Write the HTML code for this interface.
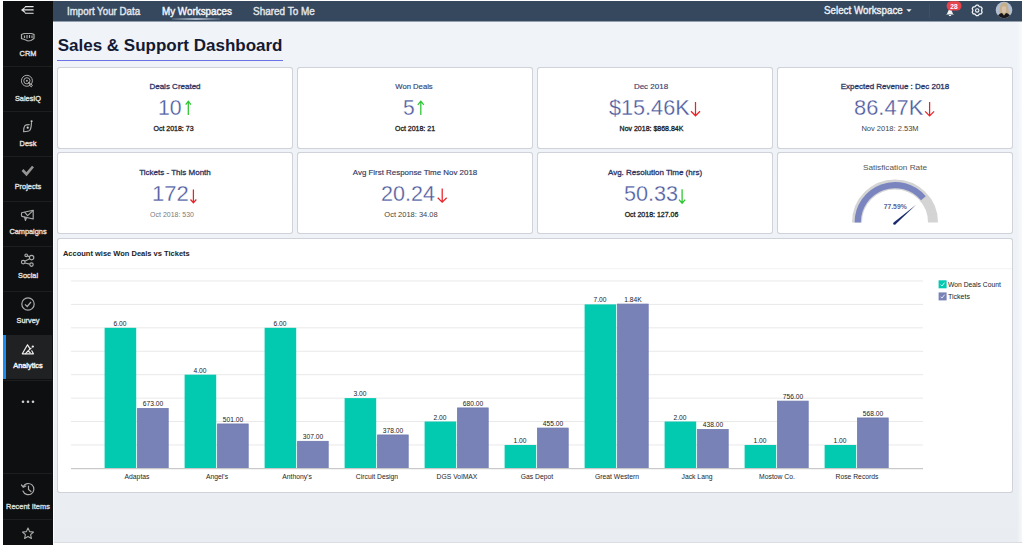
<!DOCTYPE html>
<html><head><meta charset="utf-8">
<style>
*{margin:0;padding:0;box-sizing:border-box}
html,body{width:1025px;height:545px;overflow:hidden;background:#fff;font-family:"Liberation Sans",sans-serif;position:relative}
.r{position:absolute}
.card{position:absolute;background:#fff;border:1px solid #cfd3d9;border-radius:3px;box-shadow:0 0 0.6px rgba(150,155,165,.35)}
svg{position:absolute;overflow:visible}
</style></head><body>
<div class="r" style="left:3px;top:1px;width:50px;height:544px;background:#0e0f10"></div>
<div class="r" style="left:53px;top:1px;width:969px;height:20.5px;background:#35485e"></div>
<div class="r" style="left:53px;top:21px;width:969px;height:521px;background:linear-gradient(#f0f3f8,#eef2f7 60%,#e9edf2)"></div>
<div class="r" style="left:53px;top:21px;width:969px;height:1px;background:#949fad"></div>
<div class="r" style="left:1016.5px;top:22px;width:5.5px;height:520px;background:linear-gradient(90deg,rgba(255,255,255,0),rgba(255,255,255,.55))"></div>
<div class="r" style="left:53px;top:542px;width:969px;height:1px;background:#d9dce0"></div>
<div class="r" style="left:53px;top:21.5px;width:1.3px;height:521px;background:#fbfcfe"></div>
<svg style="left:0;top:0" width="60" height="20"><g stroke="#e6e6e6" stroke-width="1.1" fill="none" stroke-linecap="round"><path d="M25.4 6.6H33.2M23 9.9H33.2M25.4 13.3H33.2M24.9 7.6L21.9 9.9L24.9 12.2"/></g></svg>
<div class="r" style="left:3px;top:66px;width:49px;height:1px;background:#1d1e20"></div>
<div class="r" style="left:3px;top:111px;width:49px;height:1px;background:#1d1e20"></div>
<div class="r" style="left:3px;top:156px;width:49px;height:1px;background:#1d1e20"></div>
<div class="r" style="left:3px;top:201px;width:49px;height:1px;background:#1d1e20"></div>
<div class="r" style="left:3px;top:246px;width:49px;height:1px;background:#1d1e20"></div>
<div class="r" style="left:3px;top:291px;width:49px;height:1px;background:#1d1e20"></div>
<div class="r" style="left:3px;top:336px;width:49px;height:1px;background:#1d1e20"></div>
<div class="r" style="left:3px;top:380px;width:49px;height:1px;background:#1d1e20"></div>
<div class="r" style="left:3px;top:335px;width:49px;height:44px;background:#202122"></div>
<div class="r" style="left:3px;top:335px;width:3px;height:44px;background:#1b8df2"></div>
<div class="r" style="left:3px;top:66px;width:49px;height:1px;background:#1d1e20"></div>
<div style="position:absolute;top:49.53px;font-size:8px;line-height:8px;color:#dadada;font-weight:normal;white-space:nowrap;left:-272.50px;width:600px;text-align:center;transform:scaleX(0.92);transform-origin:300px 0;-webkit-text-stroke:0.45px #dadada;">CRM</div>
<div style="position:absolute;top:95.03px;font-size:8px;line-height:8px;color:#dadada;font-weight:normal;white-space:nowrap;left:-272.50px;width:600px;text-align:center;transform:scaleX(0.92);transform-origin:300px 0;-webkit-text-stroke:0.45px #dadada;">SalesIQ</div>
<div style="position:absolute;top:139.93px;font-size:8px;line-height:8px;color:#dadada;font-weight:normal;white-space:nowrap;left:-272.50px;width:600px;text-align:center;transform:scaleX(0.92);transform-origin:300px 0;-webkit-text-stroke:0.45px #dadada;">Desk</div>
<div style="position:absolute;top:183.43px;font-size:8px;line-height:8px;color:#dadada;font-weight:normal;white-space:nowrap;left:-272.50px;width:600px;text-align:center;transform:scaleX(0.92);transform-origin:300px 0;-webkit-text-stroke:0.45px #dadada;">Projects</div>
<div style="position:absolute;top:228.43px;font-size:8px;line-height:8px;color:#dadada;font-weight:normal;white-space:nowrap;left:-272.50px;width:600px;text-align:center;transform:scaleX(0.92);transform-origin:300px 0;-webkit-text-stroke:0.45px #dadada;">Campaigns</div>
<div style="position:absolute;top:272.13px;font-size:8px;line-height:8px;color:#dadada;font-weight:normal;white-space:nowrap;left:-272.50px;width:600px;text-align:center;transform:scaleX(0.92);transform-origin:300px 0;-webkit-text-stroke:0.45px #dadada;">Social</div>
<div style="position:absolute;top:317.13px;font-size:8px;line-height:8px;color:#dadada;font-weight:normal;white-space:nowrap;left:-272.50px;width:600px;text-align:center;transform:scaleX(0.92);transform-origin:300px 0;-webkit-text-stroke:0.45px #dadada;">Survey</div>
<div style="position:absolute;top:362.33px;font-size:8px;line-height:8px;color:#f4f4f4;font-weight:normal;white-space:nowrap;left:-272.50px;width:600px;text-align:center;transform:scaleX(0.92);transform-origin:300px 0;-webkit-text-stroke:0.45px #f4f4f4;">Analytics</div>
<svg style="left:0;top:0" width="60" height="60"><g stroke="#ababab" stroke-width="1.2" fill="none"><path d="M21.5 34.5L24 33.5H31.5L34 34.5V38.5L31 40.5L28 41L24.5 39.5L21.5 38.5Z"/><path d="M24.5 35.5V38M27 35V38.5M29.5 35V38M32 35.5V38"/></g></svg>
<svg style="left:0;top:0" width="60" height="100"><g stroke="#a9a9a9" stroke-width="1.0" fill="none"><circle cx="26.9" cy="80.8" r="5.5"/><circle cx="26.9" cy="80.8" r="3.1"/><path d="M28 82L30.2 84.3"/><path d="M30.2 83.6L32.4 85.1L31.3 86.9L29.4 85.2Z"/></g><circle cx="26.9" cy="80.8" r="1.0" fill="#a9a9a9"/></svg>
<svg style="left:0;top:0" width="60" height="140"><g stroke="#ababab" stroke-width="1.15" fill="none" stroke-linecap="round"><path d="M31.5 122.6Q31.2 128.6 29.8 130.3Q28.8 131.4 23.6 131.7Q23.6 127.2 24.9 125.6Q25.7 124.7 29.2 124.6"/></g><circle cx="31.6" cy="121.3" r="1.05" fill="#d0d0d0"/><circle cx="27.7" cy="127.7" r="1.1" fill="#d8d8d8"/></svg>
<svg style="left:0;top:0" width="60" height="200"><path d="M22.5 170L26.5 174.2L33 166.5" stroke="#959595" stroke-width="2.6" fill="none"/></svg>
<svg style="left:0;top:0" width="60" height="240"><g stroke="#ababab" stroke-width="1.15" fill="none" stroke-linejoin="round" stroke-linecap="round"><path d="M21.6 212.8Q21.2 214.8 21.8 216.4L33.2 219V210.2Z"/><path d="M24.8 212.4L27.6 215.6L33 210.6"/><path d="M24.6 217.2L25.4 220.4L26.6 217.6"/></g></svg>
<svg style="left:0;top:0" width="60" height="280"><g stroke="#ababab" stroke-width="1.15" fill="none"><circle cx="26.2" cy="255.3" r="1.3"/><circle cx="31.6" cy="257.6" r="2.2"/><circle cx="23.2" cy="262.1" r="1.8"/><circle cx="31.5" cy="264.6" r="1.7"/><path d="M29.6 258.7L24.8 261.2M25 263L29.8 264.1M27.4 255.9L29.5 256.8"/></g></svg>
<svg style="left:0;top:0" width="60" height="320"><g stroke="#ababab" stroke-width="1.2" fill="none"><circle cx="28" cy="304" r="6.2"/><path d="M25 304.3L27.2 306.5L31 302"/></g></svg>
<svg style="left:0;top:0" width="60" height="380"><g stroke="#f0f0f0" stroke-width="1.2" fill="none" stroke-linejoin="round" stroke-linecap="round"><path d="M29.8 348.3L27.5 344.8L22.3 353.8H33.4L31.8 350.8"/><path d="M25.6 353.6L28 350.8L30.2 352.8M28.6 350.4L31 348.2"/></g><circle cx="32.8" cy="346.6" r="1.15" fill="#f0f0f0"/></svg>
<svg style="left:0;top:0" width="60" height="410"><g fill="#d0d0d0"><circle cx="23" cy="401.8" r="1.3"/><circle cx="28" cy="401.8" r="1.3"/><circle cx="33" cy="401.8" r="1.3"/></g></svg>
<div class="r" style="left:3px;top:473px;width:49px;height:1px;background:#1d1e20"></div>
<div class="r" style="left:3px;top:519px;width:49px;height:1px;background:#1d1e20"></div>
<svg style="left:0;top:0" width="60" height="545"><g stroke="#ababab" stroke-width="1.2" fill="none" stroke-linecap="round"><path d="M23.3 486.5A5.6 5.6 0 1 1 23 491"/><path d="M21.5 485L23.3 487.2L25.8 486"/><path d="M28.5 486V489.5L31 491.5"/></g><path d="M28 528L29.6 531.6L33.5 532L30.6 534.6L31.4 538.5L28 536.5L24.6 538.5L25.4 534.6L22.5 532L26.4 531.6Z" stroke="#ababab" stroke-width="1.1" fill="none" stroke-linejoin="round"/></svg>
<div style="position:absolute;top:503.33px;font-size:8px;line-height:8px;color:#d6d6d6;font-weight:normal;white-space:nowrap;left:-272.50px;width:600px;text-align:center;transform:scaleX(0.93);transform-origin:300px 0;-webkit-text-stroke:0.4px #d6d6d6;">Recent Items</div>
<div style="position:absolute;top:5.69px;font-size:11px;line-height:11px;color:#e4e8ee;font-weight:normal;white-space:nowrap;left:66.80px;transform:scaleX(0.885);transform-origin:0 0;-webkit-text-stroke:0.4px #e4e8ee;">Import Your Data</div>
<div style="position:absolute;top:5.69px;font-size:11px;line-height:11px;color:#f4f6f8;font-weight:normal;white-space:nowrap;left:162.40px;transform:scaleX(0.895);transform-origin:0 0;-webkit-text-stroke:0.45px #f4f6f8;">My Workspaces</div>
<div style="position:absolute;top:5.69px;font-size:11px;line-height:11px;color:#e4e8ee;font-weight:normal;white-space:nowrap;left:252.90px;transform:scaleX(0.905);transform-origin:0 0;-webkit-text-stroke:0.4px #e4e8ee;">Shared To Me</div>
<div class="r" style="left:172px;top:18px;width:48px;height:1.5px;background:linear-gradient(90deg,rgba(160,175,195,.2),rgba(175,188,205,.9),rgba(160,175,195,.2))"></div>
<div style="position:absolute;top:5.09px;font-size:11px;line-height:11px;color:#eef1f5;font-weight:normal;white-space:nowrap;left:824.30px;transform:scaleX(0.89);transform-origin:0 0;-webkit-text-stroke:0.4px #eef1f5;">Select Workspace</div>
<svg style="left:0;top:0" width="1025" height="22"><path d="M906.3 9.3H911.6L909 12Z" fill="#eef1f5"/><path d="M929.5 4V18" stroke="#3e5068" stroke-width="1"/><path d="M945.5 14.6Q947.5 14 948 11.5Q948.5 9.5 950 9.5Q951.5 9.5 952 11.5Q952.5 14 954.5 14.6Z" fill="#f4f4f4"/><path d="M948.8 15.2Q950 16.4 951.2 15.2" stroke="#f4f4f4" stroke-width="1" fill="none"/><rect x="946.6" y="1.2" width="14.9" height="9.4" rx="4.7" fill="#e8454a"/><path d="M976.37 5.17L978.03 5.17L979.35 6.68L981.32 7.06L982.15 8.50L981.50 10.40L982.15 12.30L981.32 13.74L979.35 14.12L978.03 15.63L976.37 15.63L975.05 14.12L973.08 13.74L972.25 12.30L972.90 10.40L972.25 8.50L973.08 7.06L975.05 6.68Z" stroke="#f2f4f7" stroke-width="1.3" fill="none" stroke-linejoin="round"/><circle cx="977.2" cy="10.4" r="1.7" stroke="#f2f4f7" stroke-width="1.1" fill="none"/><defs><clipPath id="av"><circle cx="1004" cy="10" r="8.3"/></clipPath></defs><g clip-path="url(#av)"><rect x="995" y="0" width="18" height="20" fill="#b3bed2"/><path d="M999 19Q999.5 9 1000.5 5Q1002 2.2 1004.5 2.5Q1007.5 3 1008 6Q1008.5 11 1010 19Z" fill="#c6b089"/><path d="M1001.8 7Q1004 5.5 1006 7L1005.8 12Q1004 14 1002 12Z" fill="#d8c2ae"/><path d="M997 19Q998 13.5 1002 13L1004 15.5L1006 13Q1010 13.5 1011 19Z" fill="#17171c"/></g></svg>
<div style="position:absolute;top:2.67px;font-size:7px;line-height:7px;color:#fff;font-weight:bold;white-space:nowrap;left:654.10px;width:600px;text-align:center;transform:scaleX(0.95);transform-origin:300px 0;">28</div>
<div style="position:absolute;top:36.61px;font-size:17px;line-height:17px;color:#151a33;font-weight:bold;white-space:nowrap;left:57.70px;">Sales &amp; Support Dashboard</div>
<div class="r" style="left:57px;top:59.5px;width:226px;height:1.5px;background:#6b72e6"></div>
<div class="card" style="left:57px;top:67px;width:236px;height:82px"></div>
<div class="card" style="left:297px;top:67px;width:236px;height:82px"></div>
<div class="card" style="left:537px;top:67px;width:236px;height:82px"></div>
<div class="card" style="left:777px;top:67px;width:236px;height:82px"></div>
<div class="card" style="left:57px;top:152px;width:236px;height:82px"></div>
<div class="card" style="left:297px;top:152px;width:236px;height:82px"></div>
<div class="card" style="left:537px;top:152px;width:236px;height:82px"></div>
<div class="card" style="left:777px;top:152px;width:236px;height:82px"></div>
<div style="position:absolute;top:83.33px;font-size:8px;line-height:8px;color:#2b3566;font-weight:normal;white-space:nowrap;left:-125.00px;width:600px;text-align:center;-webkit-text-stroke:0.3px #2b3566;">Deals Created</div>
<div style="position:absolute;top:97.38px;font-size:22px;line-height:22px;color:#4c599e;font-weight:normal;white-space:nowrap;left:157.80px;transform:scaleX(0.96455);transform-origin:0 0;-webkit-text-stroke:0.3px #fff;">10</div>
<div style="position:absolute;top:125.07px;font-size:7px;line-height:7px;color:#222;font-weight:normal;white-space:nowrap;left:-126.50px;width:600px;text-align:center;-webkit-text-stroke:0.3px #222;">Oct 2018: 73</div>
<div style="position:absolute;top:83.33px;font-size:8px;line-height:8px;color:#38406e;font-weight:normal;white-space:nowrap;left:113.50px;width:600px;text-align:center;transform:scaleX(0.96);transform-origin:300px 0;-webkit-text-stroke:0.15px #38406e;">Won Deals</div>
<div style="position:absolute;top:97.38px;font-size:22px;line-height:22px;color:#4c599e;font-weight:normal;white-space:nowrap;left:402.60px;transform:scaleX(0.955);transform-origin:0 0;-webkit-text-stroke:0.3px #fff;">5</div>
<div style="position:absolute;top:125.07px;font-size:7px;line-height:7px;color:#222;font-weight:normal;white-space:nowrap;left:115.00px;width:600px;text-align:center;-webkit-text-stroke:0.3px #222;">Oct 2018: 21</div>
<div style="position:absolute;top:83.33px;font-size:8px;line-height:8px;color:#38406e;font-weight:normal;white-space:nowrap;left:351.00px;width:600px;text-align:center;-webkit-text-stroke:0.15px #38406e;">Dec 2018</div>
<div style="position:absolute;top:97.38px;font-size:22px;line-height:22px;color:#4c599e;font-weight:normal;white-space:nowrap;left:609.40px;transform:scaleX(0.98365);transform-origin:0 0;-webkit-text-stroke:0.3px #fff;">$15.46K</div>
<div style="position:absolute;top:125.07px;font-size:7px;line-height:7px;color:#222;font-weight:normal;white-space:nowrap;left:351.50px;width:600px;text-align:center;-webkit-text-stroke:0.3px #222;">Nov 2018: $868.84K</div>
<div style="position:absolute;top:83.33px;font-size:8px;line-height:8px;color:#2b3566;font-weight:normal;white-space:nowrap;left:595.00px;width:600px;text-align:center;-webkit-text-stroke:0.3px #2b3566;">Expected Revenue : Dec 2018</div>
<div style="position:absolute;top:97.38px;font-size:22px;line-height:22px;color:#4c599e;font-weight:normal;white-space:nowrap;left:854.20px;transform:scaleX(0.9932);transform-origin:0 0;-webkit-text-stroke:0.3px #fff;">86.47K</div>
<div style="position:absolute;top:124.65px;font-size:7.5px;line-height:7.5px;color:#444;font-weight:normal;white-space:nowrap;left:590.00px;width:600px;text-align:center;">Nov 2018: 2.53M</div>
<div style="position:absolute;top:168.83px;font-size:8px;line-height:8px;color:#2b3566;font-weight:normal;white-space:nowrap;left:-125.00px;width:600px;text-align:center;-webkit-text-stroke:0.3px #2b3566;">Tickets - This Month</div>
<div style="position:absolute;top:183.18px;font-size:22px;line-height:22px;color:#4c599e;font-weight:normal;white-space:nowrap;left:152.20px;transform:scaleX(1.00275);transform-origin:0 0;-webkit-text-stroke:0.3px #fff;">172</div>
<div style="position:absolute;top:210.91px;font-size:7.2px;line-height:7.2px;color:#7a7a7a;font-weight:normal;white-space:nowrap;left:-128.50px;width:600px;text-align:center;transform:scaleX(0.97);transform-origin:300px 0;">Oct 2018: 530</div>
<div style="position:absolute;top:168.83px;font-size:8px;line-height:8px;color:#2f3662;font-weight:normal;white-space:nowrap;left:115.00px;width:600px;text-align:center;transform:scaleX(0.99);transform-origin:300px 0;-webkit-text-stroke:0.15px #2f3662;">Avg First Response Time Nov 2018</div>
<div style="position:absolute;top:183.18px;font-size:22px;line-height:22px;color:#4c599e;font-weight:normal;white-space:nowrap;left:381.20px;transform:scaleX(0.9788749999999998);transform-origin:0 0;-webkit-text-stroke:0.3px #fff;">20.24</div>
<div style="position:absolute;top:210.65px;font-size:7.5px;line-height:7.5px;color:#444;font-weight:normal;white-space:nowrap;left:111.00px;width:600px;text-align:center;">Oct 2018: 34.08</div>
<div style="position:absolute;top:168.83px;font-size:8px;line-height:8px;color:#2b3566;font-weight:normal;white-space:nowrap;left:355.00px;width:600px;text-align:center;-webkit-text-stroke:0.3px #2b3566;">Avg. Resolution Time (hrs)</div>
<div style="position:absolute;top:183.18px;font-size:22px;line-height:22px;color:#4c599e;font-weight:normal;white-space:nowrap;left:623.70px;transform:scaleX(0.98365);transform-origin:0 0;-webkit-text-stroke:0.3px #fff;">50.33</div>
<div style="position:absolute;top:211.07px;font-size:7px;line-height:7px;color:#222;font-weight:normal;white-space:nowrap;left:351.50px;width:600px;text-align:center;-webkit-text-stroke:0.3px #222;">Oct 2018: 127.06</div>
<svg style="left:0;top:0" width="1025" height="240"><path d="M188.3 115V101.8M185.70000000000002 104.60000000000001L188.3 101.2L190.9 104.60000000000001" stroke="#2bc52f" stroke-width="1.25" fill="none"/><path d="M420.8 115V101.8M417.8 104.8L420.8 101.2L423.8 104.8" stroke="#2bc52f" stroke-width="1.25" fill="none"/><path d="M695.5 102V115.2M691.0 111.3L695.5 115.8L700.0 111.3" stroke="#e8232a" stroke-width="1.25" fill="none"/><path d="M929.6 102V115.30000000000001M925.1 111.4L929.6 115.9L934.1 111.4" stroke="#e8232a" stroke-width="1.25" fill="none"/><path d="M193.4 189.6V202.1M190.5 199.5L193.4 202.7L196.3 199.5" stroke="#e8232a" stroke-width="1.25" fill="none"/><path d="M442.2 188.6V201.6M437.7 197.7L442.2 202.2L446.7 197.7" stroke="#e8232a" stroke-width="1.25" fill="none"/><path d="M682.1 189.3V202.6M679.0 199.6L682.1 203.2L685.2 199.6" stroke="#2bc52f" stroke-width="1.25" fill="none"/></svg>
<div style="position:absolute;top:163.53px;font-size:8px;line-height:8px;color:#555;font-weight:normal;white-space:nowrap;left:594.90px;width:600px;text-align:center;transform:scaleX(1.03);transform-origin:300px 0;">Satisfication Rate</div>
<svg style="left:0;top:0" width="1025" height="240"><path d="M857.00 222.40A38.0 38.0 0 0 1 933.00 222.40" stroke="#d4d4d4" stroke-width="10" fill="none"/><path d="M857.70 222.40A37.3 37.3 0 0 1 923.43 198.26" stroke="#7a85c0" stroke-width="6.2" fill="none"/><path d="M893.6 222.6L916.1 204.8L895.3 224.6Z" fill="#1c2a6b"/><circle cx="894.4" cy="223.6" r="1.2" fill="#1c2a6b"/></svg>
<div style="position:absolute;top:203.84px;font-size:6.8px;line-height:6.8px;color:#5a6598;font-weight:bold;white-space:nowrap;left:595.20px;width:600px;text-align:center;">77.59%</div>
<div class="card" style="left:57px;top:238px;width:956px;height:254.6px"></div>
<div style="position:absolute;top:250.15px;font-size:7.5px;line-height:7.5px;color:#222;font-weight:bold;white-space:nowrap;left:62.90px;">Account wise Won Deals vs Tickets</div>
<svg style="left:0;top:0" width="1025" height="545"><path d="M58 268.7H1012" stroke="#f3f3f3" stroke-width="1"/><path d="M71 444.97H923" stroke="#e9e9e9" stroke-width="1"/><path d="M71 421.54H923" stroke="#e9e9e9" stroke-width="1"/><path d="M71 398.11H923" stroke="#e9e9e9" stroke-width="1"/><path d="M71 374.68H923" stroke="#e9e9e9" stroke-width="1"/><path d="M71 351.25H923" stroke="#e9e9e9" stroke-width="1"/><path d="M71 327.82H923" stroke="#e9e9e9" stroke-width="1"/><path d="M71 304.39H923" stroke="#e9e9e9" stroke-width="1"/><path d="M71 280.96H923" stroke="#e9e9e9" stroke-width="1"/><rect x="104.6" y="327.82" width="31.6" height="140.58" fill="#02cab1"/><rect x="137.6" y="408.56" width="30.6" height="59.84" fill="#7882b6" stroke="#6d77ad" stroke-width="0.8"/><rect x="184.6" y="374.68" width="31.6" height="93.72" fill="#02cab1"/><rect x="217.6" y="423.96" width="30.6" height="44.44" fill="#7882b6" stroke="#6d77ad" stroke-width="0.8"/><rect x="264.6" y="327.82" width="31.6" height="140.58" fill="#02cab1"/><rect x="297.6" y="441.32" width="30.6" height="27.08" fill="#7882b6" stroke="#6d77ad" stroke-width="0.8"/><rect x="344.6" y="398.11" width="31.6" height="70.29" fill="#02cab1"/><rect x="377.6" y="434.96" width="30.6" height="33.44" fill="#7882b6" stroke="#6d77ad" stroke-width="0.8"/><rect x="424.6" y="421.54" width="31.6" height="46.86" fill="#02cab1"/><rect x="457.6" y="407.93" width="30.6" height="60.47" fill="#7882b6" stroke="#6d77ad" stroke-width="0.8"/><rect x="504.6" y="444.97" width="31.6" height="23.43" fill="#02cab1"/><rect x="537.6" y="428.07" width="30.6" height="40.33" fill="#7882b6" stroke="#6d77ad" stroke-width="0.8"/><rect x="584.6" y="304.39" width="31.6" height="164.01" fill="#02cab1"/><rect x="617.6" y="304.10" width="30.6" height="164.30" fill="#7882b6" stroke="#6d77ad" stroke-width="0.8"/><rect x="664.6" y="421.54" width="31.6" height="46.86" fill="#02cab1"/><rect x="697.6" y="429.59" width="30.6" height="38.81" fill="#7882b6" stroke="#6d77ad" stroke-width="0.8"/><rect x="744.6" y="444.97" width="31.6" height="23.43" fill="#02cab1"/><rect x="777.6" y="401.13" width="30.6" height="67.27" fill="#7882b6" stroke="#6d77ad" stroke-width="0.8"/><rect x="824.6" y="444.97" width="31.6" height="23.43" fill="#02cab1"/><rect x="857.6" y="417.96" width="30.6" height="50.44" fill="#7882b6" stroke="#6d77ad" stroke-width="0.8"/><path d="M71 468.6H923" stroke="#c9c9c9" stroke-width="1.4"/></svg>
<div style="position:absolute;top:320.86px;font-size:6.8px;line-height:6.8px;color:#1a1a1a;font-weight:normal;white-space:nowrap;left:-179.60px;width:600px;text-align:center;transform:scaleX(0.98);transform-origin:300px 0;">6.00</div>
<div style="position:absolute;top:401.20px;font-size:6.8px;line-height:6.8px;color:#1a1a1a;font-weight:normal;white-space:nowrap;left:-147.10px;width:600px;text-align:center;transform:scaleX(0.98);transform-origin:300px 0;">673.00</div>
<div style="position:absolute;top:472.97px;font-size:7px;line-height:7px;color:#1e1e1e;font-weight:normal;white-space:nowrap;left:-163.40px;width:600px;text-align:center;transform:scaleX(0.97);transform-origin:300px 0;">Adaptas</div>
<div style="position:absolute;top:367.72px;font-size:6.8px;line-height:6.8px;color:#1a1a1a;font-weight:normal;white-space:nowrap;left:-99.60px;width:600px;text-align:center;transform:scaleX(0.98);transform-origin:300px 0;">4.00</div>
<div style="position:absolute;top:416.60px;font-size:6.8px;line-height:6.8px;color:#1a1a1a;font-weight:normal;white-space:nowrap;left:-67.10px;width:600px;text-align:center;transform:scaleX(0.98);transform-origin:300px 0;">501.00</div>
<div style="position:absolute;top:472.97px;font-size:7px;line-height:7px;color:#1e1e1e;font-weight:normal;white-space:nowrap;left:-83.40px;width:600px;text-align:center;transform:scaleX(0.97);transform-origin:300px 0;">Angel's</div>
<div style="position:absolute;top:320.86px;font-size:6.8px;line-height:6.8px;color:#1a1a1a;font-weight:normal;white-space:nowrap;left:-19.60px;width:600px;text-align:center;transform:scaleX(0.98);transform-origin:300px 0;">6.00</div>
<div style="position:absolute;top:433.96px;font-size:6.8px;line-height:6.8px;color:#1a1a1a;font-weight:normal;white-space:nowrap;left:12.90px;width:600px;text-align:center;transform:scaleX(0.98);transform-origin:300px 0;">307.00</div>
<div style="position:absolute;top:472.97px;font-size:7px;line-height:7px;color:#1e1e1e;font-weight:normal;white-space:nowrap;left:-3.40px;width:600px;text-align:center;transform:scaleX(0.97);transform-origin:300px 0;">Anthony's</div>
<div style="position:absolute;top:391.15px;font-size:6.8px;line-height:6.8px;color:#1a1a1a;font-weight:normal;white-space:nowrap;left:60.40px;width:600px;text-align:center;transform:scaleX(0.98);transform-origin:300px 0;">3.00</div>
<div style="position:absolute;top:427.61px;font-size:6.8px;line-height:6.8px;color:#1a1a1a;font-weight:normal;white-space:nowrap;left:92.90px;width:600px;text-align:center;transform:scaleX(0.98);transform-origin:300px 0;">378.00</div>
<div style="position:absolute;top:472.97px;font-size:7px;line-height:7px;color:#1e1e1e;font-weight:normal;white-space:nowrap;left:76.60px;width:600px;text-align:center;transform:scaleX(0.97);transform-origin:300px 0;">Circuit Design</div>
<div style="position:absolute;top:414.58px;font-size:6.8px;line-height:6.8px;color:#1a1a1a;font-weight:normal;white-space:nowrap;left:140.40px;width:600px;text-align:center;transform:scaleX(0.98);transform-origin:300px 0;">2.00</div>
<div style="position:absolute;top:400.58px;font-size:6.8px;line-height:6.8px;color:#1a1a1a;font-weight:normal;white-space:nowrap;left:172.90px;width:600px;text-align:center;transform:scaleX(0.98);transform-origin:300px 0;">680.00</div>
<div style="position:absolute;top:472.97px;font-size:7px;line-height:7px;color:#1e1e1e;font-weight:normal;white-space:nowrap;left:156.60px;width:600px;text-align:center;transform:scaleX(0.97);transform-origin:300px 0;">DGS VolMAX</div>
<div style="position:absolute;top:438.01px;font-size:6.8px;line-height:6.8px;color:#1a1a1a;font-weight:normal;white-space:nowrap;left:220.40px;width:600px;text-align:center;transform:scaleX(0.98);transform-origin:300px 0;">1.00</div>
<div style="position:absolute;top:420.72px;font-size:6.8px;line-height:6.8px;color:#1a1a1a;font-weight:normal;white-space:nowrap;left:252.90px;width:600px;text-align:center;transform:scaleX(0.98);transform-origin:300px 0;">455.00</div>
<div style="position:absolute;top:472.97px;font-size:7px;line-height:7px;color:#1e1e1e;font-weight:normal;white-space:nowrap;left:236.60px;width:600px;text-align:center;transform:scaleX(0.97);transform-origin:300px 0;">Gas Depot</div>
<div style="position:absolute;top:297.43px;font-size:6.8px;line-height:6.8px;color:#1a1a1a;font-weight:normal;white-space:nowrap;left:300.40px;width:600px;text-align:center;transform:scaleX(0.98);transform-origin:300px 0;">7.00</div>
<div style="position:absolute;top:296.74px;font-size:6.8px;line-height:6.8px;color:#1a1a1a;font-weight:normal;white-space:nowrap;left:332.90px;width:600px;text-align:center;transform:scaleX(0.98);transform-origin:300px 0;">1.84K</div>
<div style="position:absolute;top:472.97px;font-size:7px;line-height:7px;color:#1e1e1e;font-weight:normal;white-space:nowrap;left:316.60px;width:600px;text-align:center;transform:scaleX(0.97);transform-origin:300px 0;">Great Western</div>
<div style="position:absolute;top:414.58px;font-size:6.8px;line-height:6.8px;color:#1a1a1a;font-weight:normal;white-space:nowrap;left:380.40px;width:600px;text-align:center;transform:scaleX(0.98);transform-origin:300px 0;">2.00</div>
<div style="position:absolute;top:422.24px;font-size:6.8px;line-height:6.8px;color:#1a1a1a;font-weight:normal;white-space:nowrap;left:412.90px;width:600px;text-align:center;transform:scaleX(0.98);transform-origin:300px 0;">438.00</div>
<div style="position:absolute;top:472.97px;font-size:7px;line-height:7px;color:#1e1e1e;font-weight:normal;white-space:nowrap;left:396.60px;width:600px;text-align:center;transform:scaleX(0.97);transform-origin:300px 0;">Jack Lang</div>
<div style="position:absolute;top:438.01px;font-size:6.8px;line-height:6.8px;color:#1a1a1a;font-weight:normal;white-space:nowrap;left:460.40px;width:600px;text-align:center;transform:scaleX(0.98);transform-origin:300px 0;">1.00</div>
<div style="position:absolute;top:393.77px;font-size:6.8px;line-height:6.8px;color:#1a1a1a;font-weight:normal;white-space:nowrap;left:492.90px;width:600px;text-align:center;transform:scaleX(0.98);transform-origin:300px 0;">756.00</div>
<div style="position:absolute;top:472.97px;font-size:7px;line-height:7px;color:#1e1e1e;font-weight:normal;white-space:nowrap;left:476.60px;width:600px;text-align:center;transform:scaleX(0.97);transform-origin:300px 0;">Mostow Co.</div>
<div style="position:absolute;top:438.01px;font-size:6.8px;line-height:6.8px;color:#1a1a1a;font-weight:normal;white-space:nowrap;left:540.40px;width:600px;text-align:center;transform:scaleX(0.98);transform-origin:300px 0;">1.00</div>
<div style="position:absolute;top:410.60px;font-size:6.8px;line-height:6.8px;color:#1a1a1a;font-weight:normal;white-space:nowrap;left:572.90px;width:600px;text-align:center;transform:scaleX(0.98);transform-origin:300px 0;">568.00</div>
<div style="position:absolute;top:472.97px;font-size:7px;line-height:7px;color:#1e1e1e;font-weight:normal;white-space:nowrap;left:556.60px;width:600px;text-align:center;transform:scaleX(0.97);transform-origin:300px 0;">Rose Records</div>
<svg style="left:0;top:0" width="1025" height="310"><rect x="938.6" y="280.3" width="8" height="8" fill="#02cab1"/><rect x="938.6" y="292.4" width="8" height="8" fill="#7882b6"/><path d="M940.6 284.6L942 286L944.6 282.6M940.6 296.7L942 298.1L944.6 294.7" stroke="#fff" stroke-width="0.8" fill="none"/></svg>
<div style="position:absolute;top:280.57px;font-size:7px;line-height:7px;color:#222;font-weight:normal;white-space:nowrap;left:948.00px;transform:scaleX(0.965);transform-origin:0 0;">Won Deals Count</div>
<div style="position:absolute;top:292.67px;font-size:7px;line-height:7px;color:#222;font-weight:normal;white-space:nowrap;left:948.00px;">Tickets</div>
</body></html>
